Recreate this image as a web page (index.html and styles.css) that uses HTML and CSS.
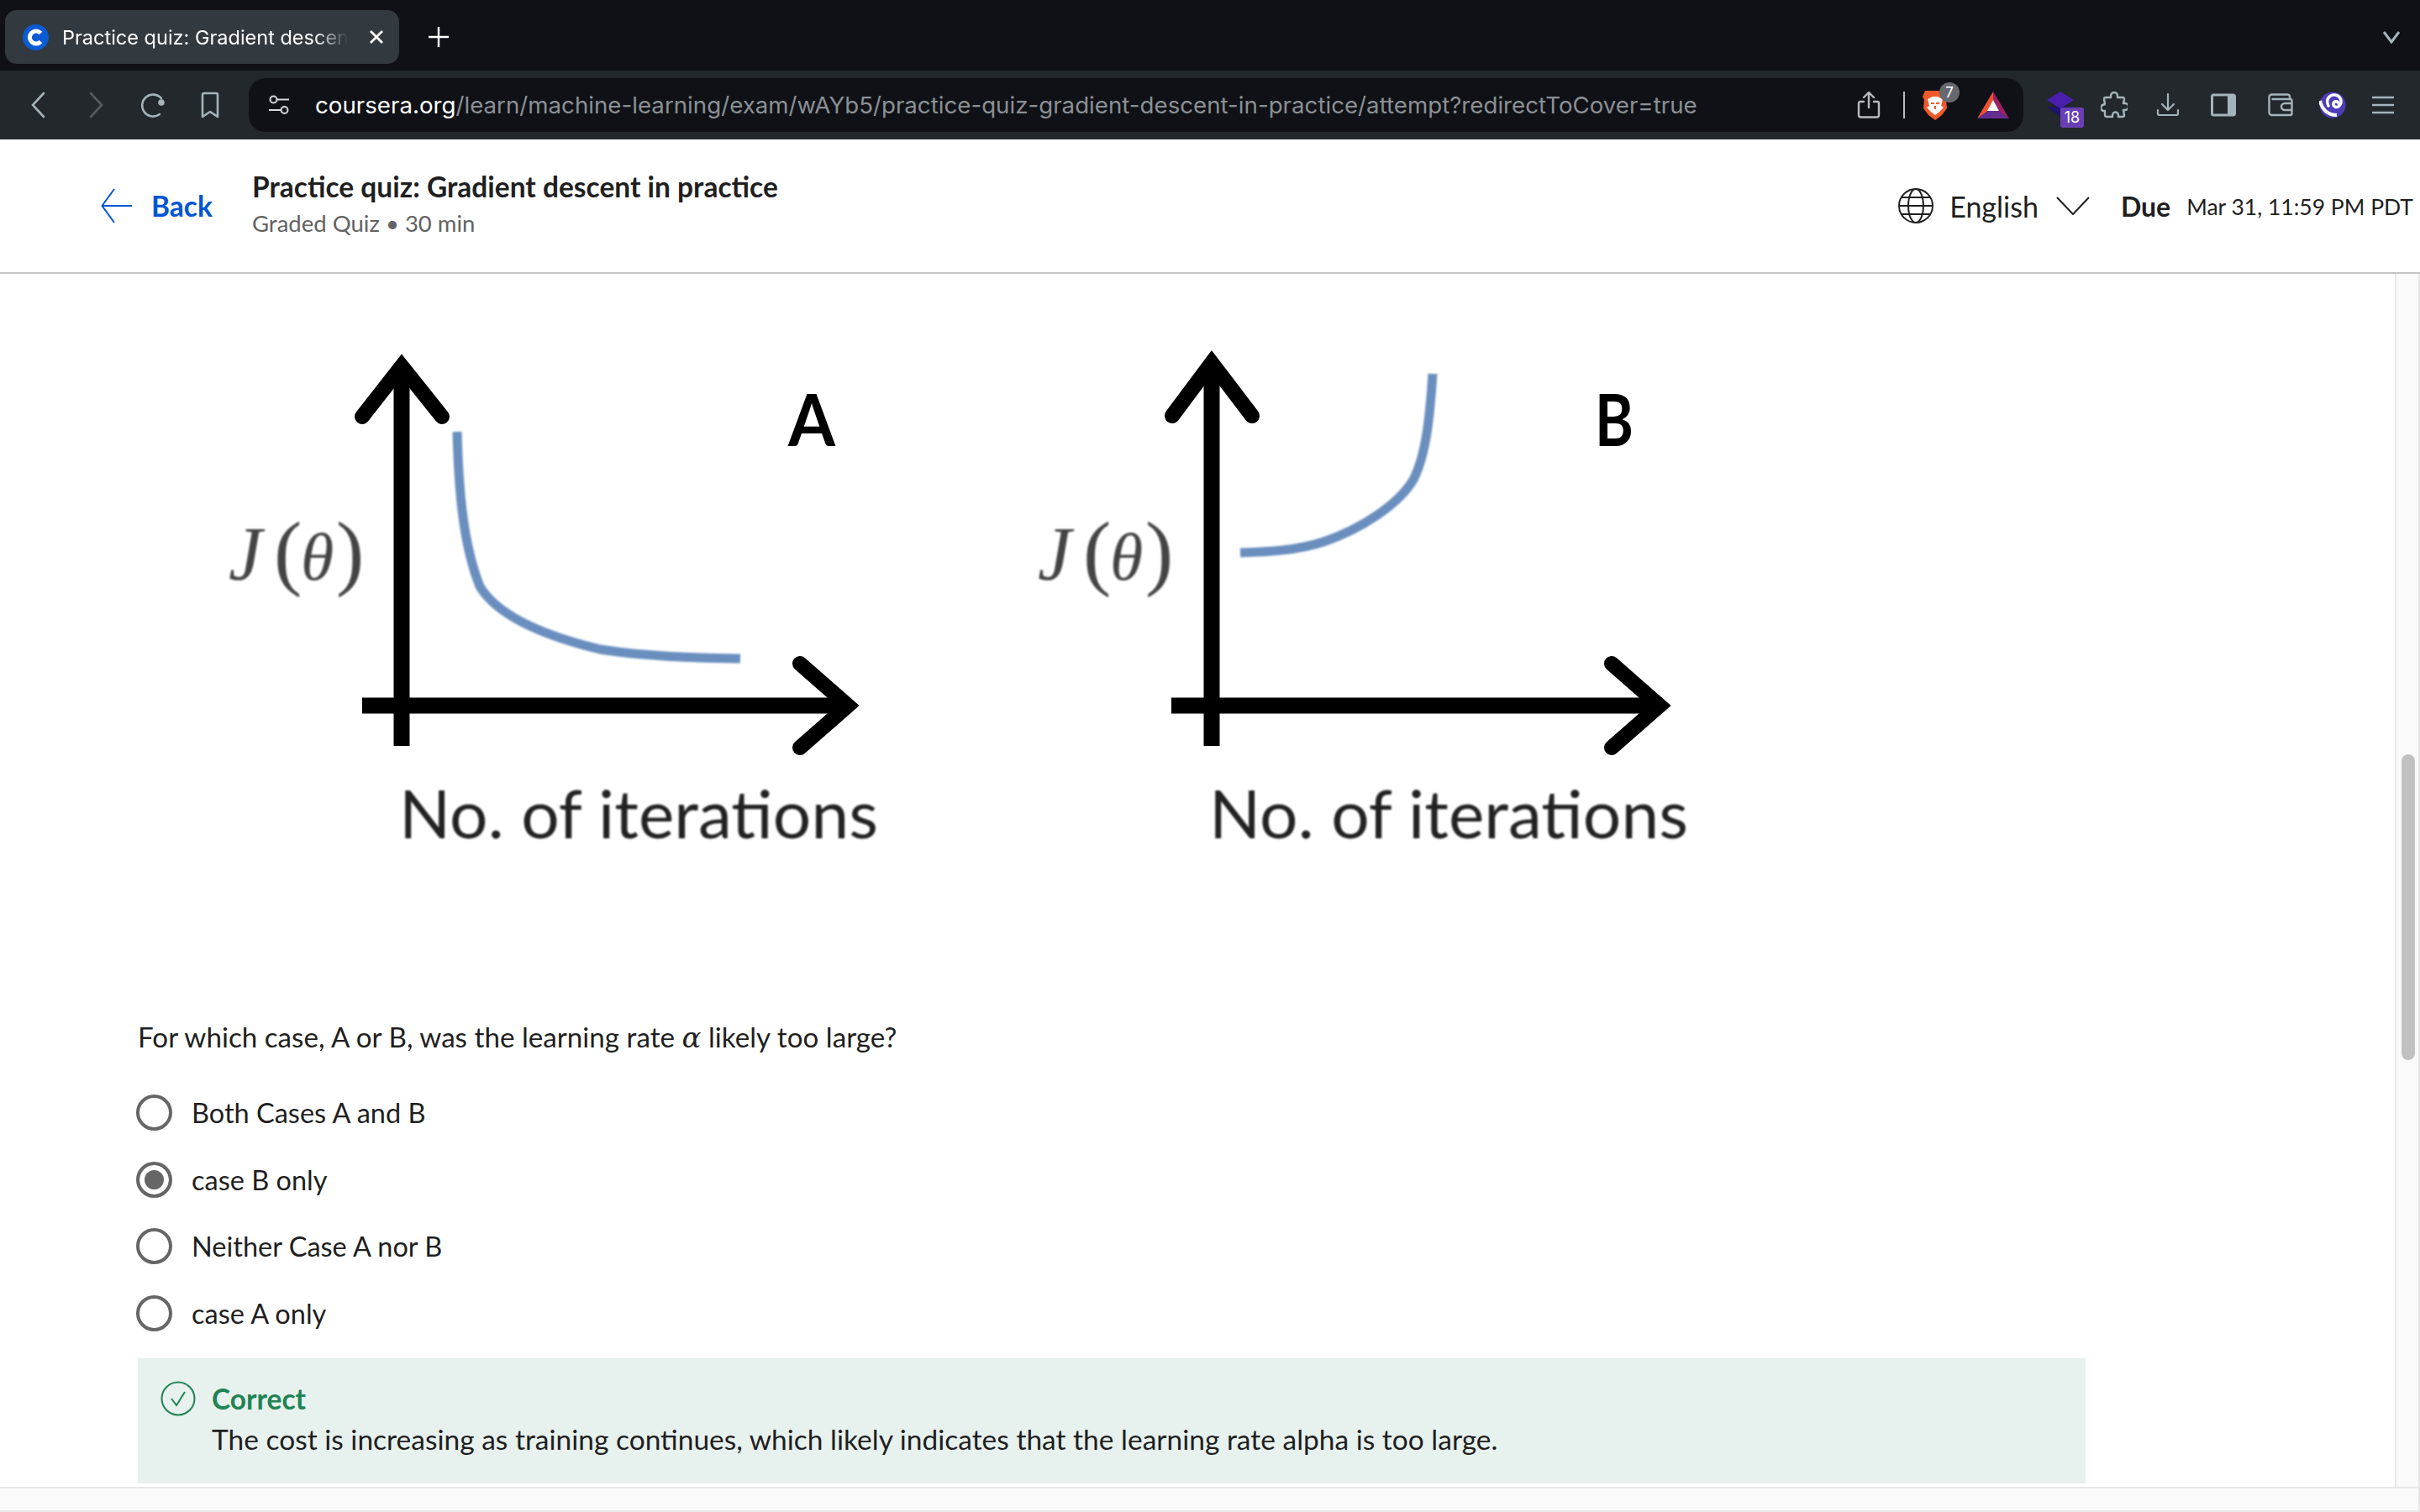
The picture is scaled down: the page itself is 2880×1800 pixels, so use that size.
FILE: index.html
```html
<!DOCTYPE html>
<html lang="en">
<head>
  <meta charset="UTF-8">
  <title>Practice quiz: Gradient descent in practice</title>
  <link rel="stylesheet" href="styles.css">
</head>
<body>

  <div class="tabstrip">
    <div class="tab">
      <svg class="favicon" viewBox="0 0 31 31"><circle cx="15.500" cy="15.500" r="15.500" fill="#0b5bd3"/><path d="M21.500 10.500a7.500 7.500 0 1 0 0 10" fill="none" stroke="#fff" stroke-width="5"/></svg>
      <span class="tab-title">Practice quiz: Gradient descent in practice</span>
      <svg class="tab-close" viewBox="0 0 18 18"><path d="M2 2l14 14M16 2L2 16" stroke="#fff" stroke-width="2.800"/></svg>
    </div>
    <svg class="tab-new" viewBox="0 0 24 24"><path d="M12 0v24M0 12h24" stroke="#fff" stroke-width="2.400"/></svg>
    <svg class="tab-list" viewBox="0 0 32 32"><path d="M7 10l9 12 9-12" fill="none" stroke="#a6b3ba" stroke-width="3"/></svg>
  </div>

  <div class="toolbar">
    <div class="nav">
      <svg class="ico" viewBox="0 0 32 32"><path d="M22 2L9 16l13 14" fill="none" stroke="#a6b3ba" stroke-width="2.600" stroke-linecap="round"/></svg>
      <svg class="ico" viewBox="0 0 32 32"><path d="M10 2l13 14-13 14" fill="none" stroke="#565b5f" stroke-width="2.600" stroke-linecap="round"/></svg>
      <svg class="ico" viewBox="0 0 32 32"><path d="M24 27a13 13 0 1 1 2-19" fill="none" stroke="#a6b3ba" stroke-width="2.600" stroke-linecap="round"/><circle cx="26" cy="13" r="3.800" fill="#a6b3ba"/></svg>
      <svg class="ico" viewBox="0 0 32 32"><path d="M7 4a2 2 0 0 1 2-2h14a2 2 0 0 1 2 2v26l-9-6-9 6z" fill="none" stroke="#a6b3ba" stroke-width="2.600" stroke-linejoin="round"/></svg>
    </div>

    <div class="urlbar">
      <svg class="site-ico" viewBox="0 0 24 24"><g fill="none" stroke="#d5dadd" stroke-width="2"><circle cx="5.500" cy="5.500" r="4"/><path d="M10 5.500h14M0 18h14"/><circle cx="18.500" cy="18" r="4"/></g></svg>
      <div class="url"><span class="domain">coursera.org</span>/learn/machine-learning/exam/wAYb5/practice-quiz-gradient-descent-in-practice/attempt?redirectToCover=true</div>
      <svg class="ico share" viewBox="0 0 32 32"><path d="M16 19V2M10 7l6-6 6 6M10 12H6a2 2 0 0 0-2 2v14a2.500 2.500 0 0 0 2.500 2.500h19A2.500 2.500 0 0 0 28 28V14a2 2 0 0 0-2-2h-4" fill="none" stroke="#b6bcc0" stroke-width="2.400" stroke-linecap="round"/></svg>
      <span class="divider"></span>
      <div class="brave">
        <svg class="ico" viewBox="0 0 32 38"><path d="M4 2h24l3 7-2 4 1 10-6 8-8 6-8-6-6-8 1-10-2-4z" fill="#f1582a"/><path d="M7 12l6-3h6l6 3-2 8 3 2-6 6-4 3-4-3-6-6 3-2z" fill="#fff"/><path d="M11 17h4M17 17h4M16 20v4" stroke="#f1582a" stroke-width="2"/></svg>
        <span class="badge-seven">7</span>
      </div>
      <svg class="bat" viewBox="0 0 38 32"><path d="M19 0L0 32l13-9 6-13z" fill="#f1502f"/><path d="M19 0l19 32-13-9-6-13z" fill="#9e1f63"/><path d="M0 32h38l-13-9H13z" fill="#662d91"/><path d="M19 10l7 13H12z" fill="#fff"/></svg>
    </div>

    <div class="ext">
      <svg class="ext-ico" viewBox="0 0 40 32"><path d="M4 18l16 12 16-12z" fill="#1f1270"/><path d="M20 0l16 10-16 10L4 10z" fill="#4a1fb0"/></svg>
      <span class="badge-ext">18</span>
    </div>
    <svg class="ico tb-a" viewBox="0 0 32 32"><path d="M12 5a4 4 0 0 1 8 0v2h7a2 2 0 0 1 1 2l-1 5h2a4 4 0 0 1 0 8h-2l1 6a2 2 0 0 1-2 2h-5v-2a3.500 3.500 0 0 0-7 0v2H7a2 2 0 0 1-2-2v-5H3a4 4 0 0 1-1-7l3-1-1-6a2 2 0 0 1 2-2h6z" fill="none" stroke="#a6b3ba" stroke-width="2.400" stroke-linejoin="round"/></svg>
    <svg class="ico tb-b" viewBox="0 0 32 32"><path d="M16 3v18M9 15l7 7 7-7M4 22v4a2 2 0 0 0 2 2h20a2 2 0 0 0 2-2v-4" fill="none" stroke="#a6b3ba" stroke-width="2.200" stroke-linecap="round"/></svg>
    <svg class="ico tb-c" viewBox="0 0 32 32"><rect x="2.500" y="4" width="27" height="24" rx="2" fill="none" stroke="#a6b3ba" stroke-width="3"/><rect x="21" y="4" width="9" height="24" fill="#a6b3ba"/></svg>
    <svg class="ico tb-d" viewBox="0 0 32 32"><path d="M2.500 10V6.500a3 3 0 0 1 3-3h19a3 3 0 0 1 2.500 2v3M5.500 9h22a2 2 0 0 1 2 2v15a2 2 0 0 1-2 2h-22a3 3 0 0 1-3-3V8M29 14h-8a3.500 3.500 0 0 0 0 8h8" fill="none" stroke="#a6b3ba" stroke-width="2.400"/></svg>
    <svg class="ico tb-e" viewBox="0 0 32 32"><circle cx="16" cy="16" r="15.500" fill="#4d3db8"/><path d="M1 11c2 10 9 17 20 17" fill="none" stroke="#fff" stroke-width="4"/><path d="M11 17C7 9 13 3 19 4c7 1 9 9 5 13-3 3-8 1-7-3 1-3 5-3 6 0" fill="none" stroke="#fff" stroke-width="3.400" stroke-linecap="round"/></svg>
    <svg class="ico tb-f" viewBox="0 0 32 32"><path d="M3 7h26M3 16h26M3 25h26" stroke="#a6b3ba" stroke-width="2.400"/></svg>
  </div>

  <header class="head">
    <a class="back">
      <svg class="back-arrow" viewBox="0 0 38 42"><path d="M16 1L1.500 21 16 41M1.500 21H37" fill="none" stroke="#0056d2" stroke-width="2"/></svg>
      <span>Back</span>
    </a>
    <div class="head-title">
      <div class="quiz-name">Practice quiz: Gradient descent in practice</div>
      <div class="quiz-meta">Graded Quiz • 30 min</div>
    </div>
    <div class="head-right">
      <svg class="globe" viewBox="0 0 42 42"><g fill="none" stroke="#1f1f1f" stroke-width="2"><circle cx="21" cy="21" r="20"/><ellipse cx="21" cy="21" rx="9" ry="20"/><path d="M1 21h40M4 11h34M4 31h34"/></g></svg>
      <span class="lang">English</span>
      <svg class="lang-chev" viewBox="0 0 40 22"><path d="M1 1l19 20L39 1" fill="none" stroke="#1f1f1f" stroke-width="2"/></svg>
      <span class="due">Due</span>
      <span class="due-date">Mar 31, 11:59 PM PDT</span>
    </div>
  </header>

  <div class="frame">
    <div class="frame-row">
      <main class="pane">
        <svg class="plots" viewBox="200 380 1900 700">
          <g class="plot-shafts">
            <path d="M478 438V888M431 840H1012" />
            <path d="M1442 434V888M1394 840H1978" />
          </g>
          <g class="plot-heads">
            <path d="M431 496L478 436L526 496M952 790L1009 840L952 890" />
            <path d="M1395 495L1442 432L1490 495M1918 790L1975 840L1918 890" />
          </g>
          <g class="plot-curves">
            <path d="M544 514C546 590 552 650 571 698C590 730 640 755 714 773C770 782 830 783 881 784" />
            <path d="M1705 445C1702 490 1698 540 1682 571C1665 600 1620 630 1575 645C1545 655 1510 657 1476 658" />
          </g>
          <text class="plot-tag" x="938" y="531" textLength="56" lengthAdjust="spacingAndGlyphs">A</text>
          <text class="plot-tag" x="1898" y="531" textLength="46" lengthAdjust="spacingAndGlyphs">B</text>
          <text class="plot-j" y="690"><tspan class="j-it" x="272">J</tspan><tspan x="326">(</tspan><tspan class="j-it j-th" x="358">θ</tspan><tspan x="400">)</tspan></text>
          <text class="plot-j" y="690"><tspan class="j-it" x="1235">J</tspan><tspan x="1289">(</tspan><tspan class="j-it j-th" x="1321">θ</tspan><tspan x="1363">)</tspan></text>
          <text class="plot-x" x="475" y="998" textLength="570" lengthAdjust="spacingAndGlyphs">No. of iterations</text>
          <text class="plot-x" x="1439" y="998" textLength="570" lengthAdjust="spacingAndGlyphs">No. of iterations</text>
        </svg>

        <p class="question">For which case, A or B, was the learning rate <em class="alpha">α</em> likely too large?</p>

        <div class="options">
          <div class="option"><span class="radio"></span>Both Cases A and B</div>
          <div class="option"><span class="radio checked"></span>case B only</div>
          <div class="option"><span class="radio"></span>Neither Case A nor B</div>
          <div class="option"><span class="radio"></span>case A only</div>
        </div>

        <div class="feedback">
          <svg class="check" viewBox="0 0 42 42"><circle cx="21" cy="21" r="19.500" fill="none" stroke="#1f8354" stroke-width="2"/><path d="M13 21l6 8 10-16" fill="none" stroke="#1f8354" stroke-width="2"/></svg>
          <div>
            <div class="feedback-title">Correct</div>
            <div>The cost is increasing as training continues, which likely indicates that the learning rate alpha is too large.</div>
          </div>
        </div>
      </main>
      <div class="vtrack"><div class="thumb"></div></div>
    </div>
    <div class="htrack"></div>
  </div>

</body>
</html>
```

FILE: styles.css
```css
* {
  box-sizing: border-box;
}

body {
  margin: 0;
  width: 2880px;
  height: 1800px;
  overflow: hidden;
  background: #fff;
  font-family: Lato, "Noto Sans", sans-serif;
  color: #1f1f1f;
}

/* browser chrome */
.tabstrip {
  display: flex;
  align-items: center;
  height: 84px;
  padding: 4px 18px 0 6px;
  background: #0f1116;
}

.tab {
  display: flex;
  align-items: center;
  width: 469px;
  height: 64px;
  padding-left: 21px;
  background: #32393f;
  border-radius: 14px;
  color: #fff;
}

.favicon {
  width: 31px;
  height: 31px;
  flex: none;
}

.tab-title {
  width: 340px;
  margin-left: 16px;
  font-family: Inter, sans-serif;
  font-size: 23.500px;
  white-space: nowrap;
  overflow: hidden;
  -webkit-mask-image: linear-gradient(to right, #000 88%, transparent 100%);
  mask-image: linear-gradient(to right, #000 88%, transparent 100%);
}

.tab-close {
  width: 18px;
  height: 18px;
  margin-left: 25px;
}

.tab-new {
  width: 24px;
  height: 24px;
  margin-left: 35px;
}

.tab-list {
  width: 32px;
  height: 32px;
  margin-left: auto;
}

.toolbar {
  display: flex;
  align-items: center;
  height: 82px;
  padding-left: 30px;
  background: #22282c;
}

.nav {
  display: flex;
  gap: 36px;
}

.ico {
  width: 32px;
  height: 32px;
  flex: none;
}

.urlbar {
  display: flex;
  align-items: center;
  width: 2112px;
  height: 64px;
  margin-left: 30px;
  padding: 0 17px 0 24px;
  background: #0f1116;
  border-radius: 20px;
}

.site-ico {
  width: 24px;
  height: 24px;
  flex: none;
}

.url {
  margin-left: 31px;
  font-family: Inter, sans-serif;
  font-size: 27.700px;
  color: #8b9094;
  white-space: nowrap;
  flex: 1;
}

.domain {
  color: #fff;
}

.divider {
  width: 2px;
  height: 32px;
  margin-left: 25px;
  background: #b6bcc0;
}

.brave {
  position: relative;
  display: flex;
  margin-left: 20px;
}

.brave .ico {
  height: 38px;
}

.badge-seven {
  position: absolute;
  top: -8px;
  left: 21px;
  width: 24px;
  height: 24px;
  border-radius: 12px;
  background: #66676f;
  color: #fff;
  font-family: Inter, sans-serif;
  font-size: 17px;
  line-height: 24px;
  text-align: center;
}

.bat {
  width: 38px;
  height: 32px;
  margin-left: 34px;
}

.ext {
  position: relative;
  display: flex;
  margin-left: 24px;
}

.ext-ico {
  width: 40px;
  height: 32px;
}

.badge-ext {
  position: absolute;
  top: 19px;
  left: 20px;
  width: 28px;
  height: 24px;
  border-radius: 3px;
  background: #6a3fb5;
  color: #fff;
  font-family: Inter, sans-serif;
  font-size: 18px;
  line-height: 24px;
  text-align: center;
}

.tb-a { margin-left: 28px; }
.tb-b { margin-left: 32px; }
.tb-c { margin-left: 34px; }
.tb-d { margin-left: 36px; }
.tb-e { margin-left: 30px; }
.tb-f { margin-left: 28px; }

/* quiz header */
.head {
  display: flex;
  align-items: center;
  height: 160px;
  padding: 0 8px 0 120px;
  border-bottom: 2px solid #c4c4c4;
}

.back {
  display: flex;
  align-items: center;
  width: 180px;
  color: #0056d2;
  font-size: 33.500px;
  font-weight: 700;
}

.back-arrow {
  width: 38px;
  height: 42px;
  margin-right: 22px;
}

.head-title {
  padding-bottom: 6px;
}

.quiz-name {
  font-size: 33.500px;
  font-weight: 700;
  line-height: 46px;
}

.quiz-meta {
  margin-top: 2px;
  font-size: 27.500px;
  line-height: 38px;
  color: #636363;
}

.head-right {
  display: flex;
  align-items: center;
  margin-left: auto;
}

.globe {
  width: 42px;
  height: 42px;
}

.lang {
  margin-left: 19px;
  font-size: 34px;
}

.lang-chev {
  width: 40px;
  height: 22px;
  margin-left: 21px;
}

.due {
  margin-left: 37px;
  font-size: 32px;
  font-weight: 700;
}

.due-date {
  margin: 2px 0 0 19px;
  font-size: 26.500px;
}

/* scrolling area */
.frame {
  height: 1474px;
  background: #fafafa;
  border-right: 2px solid #e8e8e8;
  border-bottom: 2px solid #e8e8e8;
}

.frame-row {
  display: flex;
  height: 1446px;
  border-bottom: 2px solid #e8e8e8;
}

.pane {
  width: 2852px;
  padding: 54px 0 0 164px;
  background: #fff;
  border-right: 2px solid #e8e8e8;
}

.vtrack {
  flex: 1;
  padding: 572px 0 0 6px;
}

.thumb {
  width: 16px;
  height: 364px;
  border-radius: 8px;
  background: #c1c1c1;
}

.plots {
  display: block;
  width: 1900px;
  height: 700px;
  margin-left: 36px;
}

.plot-shafts path {
  fill: none;
  stroke: #000;
  stroke-width: 19px;
  filter: blur(0.7px);
}

.plot-heads path {
  fill: none;
  stroke: #000;
  stroke-width: 18px;
  stroke-linecap: round;
  stroke-linejoin: miter;
  filter: blur(0.7px);
}

.plot-curves path {
  fill: none;
  stroke: #6a8fbf;
  stroke-width: 11px;
  filter: blur(0.8px);
}

.plot-tag {
  font-family: Lato, sans-serif;
  font-size: 86px;
  font-weight: 700;
  fill: #000;
}

.plot-j {
  font-family: "Liberation Serif", serif;
  font-size: 100px;
  fill: #444;
  filter: blur(0.8px);
}

.j-it {
  font-style: italic;
  font-size: 90px;
}

.j-th {
  font-size: 80px;
}

.plot-x {
  font-family: Lato, sans-serif;
  font-size: 80px;
  fill: #222;
  filter: blur(0.8px);
}

.question {
  margin: 0;
  padding-top: 131px;
  font-size: 33.200px;
  line-height: 46px;
}

.alpha {
  font-family: "DejaVu Serif", serif;
  font-size: 34px;
  line-height: 30px;
}

.options {
  margin: 28px 0 0 -2px;
}

.option {
  display: flex;
  align-items: center;
  height: 79.500px;
  font-size: 32.500px;
}

.radio {
  width: 43px;
  height: 43px;
  margin-right: 23px;
  border: 4px solid #666;
  border-radius: 50%;
  background: #fff;
}

.radio.checked {
  border-color: #666;
  background: #666;
  box-shadow: inset 0 0 0 6px #fff;
}

.feedback {
  display: flex;
  width: 2318px;
  height: 149px;
  margin-top: 14px;
  padding: 24px 0 0 27px;
  background: #e7f1ee;
  font-size: 33.500px;
  line-height: 48px;
}

.check {
  width: 42px;
  height: 42px;
  margin: 3px 19px 0 0;
  flex: none;
}

.feedback-title {
  color: #1f8354;
  font-weight: 700;
}

.htrack {
  height: 26px;
}
```
